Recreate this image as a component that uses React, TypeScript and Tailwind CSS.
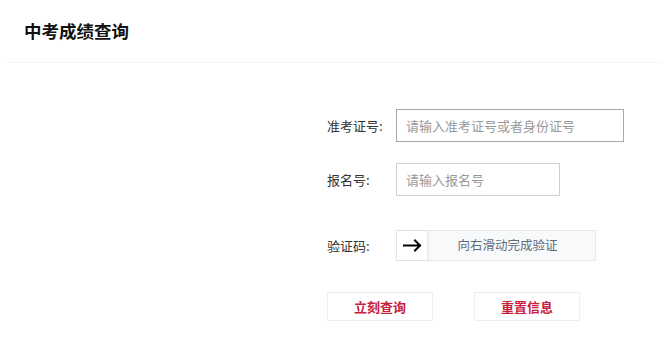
const font = { fontFamily: '"Noto Sans CJK SC", "Noto Sans", sans-serif' };

function ArrowIcon() {
  return (
    <svg width="19" height="13" viewBox="0 0 19 13" fill="none">
      <path d="M1 6.5h16M12 1.5l5 5-5 5" stroke="#000" strokeWidth="2" strokeLinecap="square" />
    </svg>
  );
}

export default function App() {
  return (
    <div className="w-full h-[359px] bg-white text-[#333]" style={font}>
      {/* Header */}
      <div className="h-[62px] flex items-center pl-6">
        <h1 className="text-[17.5px] font-bold text-[#111] leading-none">中考成绩查询</h1>
      </div>
      <div className="ml-[5px] border-b border-[#f4f4f4]" />

      {/* Form */}
      <div className="pl-[327px] pt-[46px]">
        <div className="flex items-center">
          <label className="w-[69px] text-[13px]">准考证号:</label>
          <input
            className="w-[228px] h-[33px] border border-[#a8a8a8] px-[9px] text-[13px] outline-none placeholder:text-[#999]"
            placeholder="请输入准考证号或者身份证号"
          />
        </div>

        <div className="flex items-center mt-[21px]">
          <label className="w-[69px] text-[13px]">报名号:</label>
          <input
            className="w-[164px] h-[33px] border border-[#cfcfcf] px-[9px] text-[13px] outline-none placeholder:text-[#999]"
            placeholder="请输入报名号"
          />
        </div>

        <div className="flex items-center mt-[34px]">
          <label className="w-[69px] text-[13px]">验证码:</label>
          <div className="w-[200px] h-[31px] flex border border-[#e4e7eb] bg-[#f7f9fa]">
            <div className="w-[31px] h-full bg-white border-r border-[#e4e7eb] flex items-center justify-center shadow-[0_0_2px_rgba(0,0,0,0.08)]">
              <ArrowIcon />
            </div>
            <div className="flex-1 flex items-center justify-center pr-[8px] text-[12.5px] text-[#5f6e7c]">
              向右滑动完成验证
            </div>
          </div>
        </div>

        <div className="flex mt-[31px] gap-[41px]">
          <button className="w-[106px] h-[29px] border border-[#eeeeee] bg-white text-[13px] font-bold text-[#c8203c]">
            立刻查询
          </button>
          <button className="w-[106px] h-[29px] border border-[#eeeeee] bg-white text-[13px] font-bold text-[#c8203c]">
            重置信息
          </button>
        </div>
      </div>
    </div>
  );
}
